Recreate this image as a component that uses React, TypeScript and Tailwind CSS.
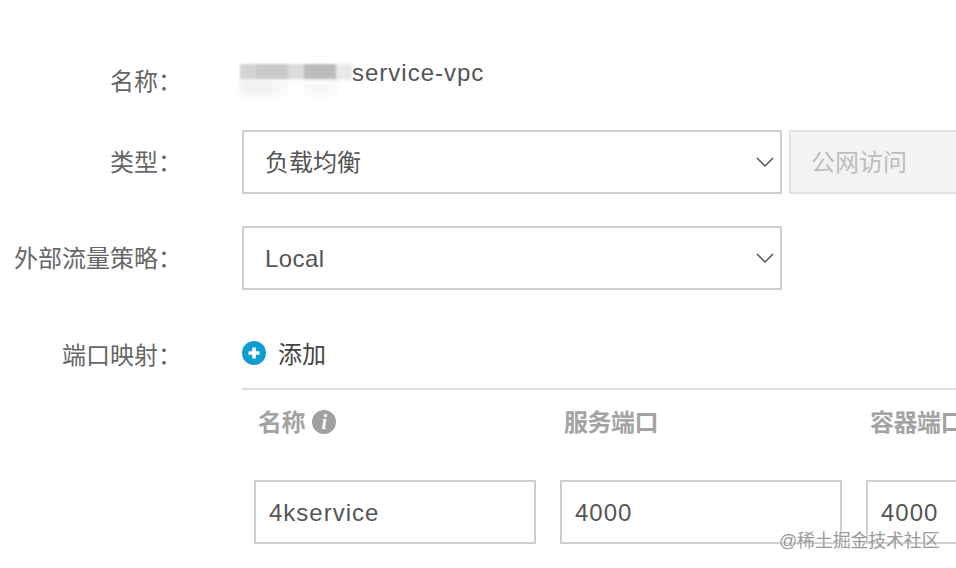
import React from 'react'

const FONT = "font-['Liberation_Sans','Noto_Sans_CJK_SC',sans-serif]"

const Chevron = () => (
    <svg width="18" height="10" viewBox="0 0 18 10" fill="none" className="shrink-0">
        <path d="M1 1l8 8 8-8" stroke="#555" strokeWidth="1.5" />
    </svg>
)

const Select = ({ text, spaced }: { text: string; spaced?: boolean }) => (
    <div className={`flex h-16 w-[540px] shrink-0 items-center justify-between border-2 border-[#cfcfcf] bg-white pl-[21px] pr-[6px] text-2xl text-[#555] ${spaced ? 'tracking-[0.4px]' : ''}`}>
        <span className="pt-[2px]">{text}</span>
        <Chevron />
    </div>
)

const Label = ({ text }: { text: string }) => (
    <div className="w-[182px] shrink-0 pt-[2px] text-right text-2xl text-[#666] whitespace-nowrap">{text}</div>
)

const COLUMNS = [
    { title: '名称', value: '4kservice', info: true },
    { title: '服务端口', value: '4000', info: false },
    { title: '容器端口', value: '4000', info: false },
]

const App = () => {
    return (
        <div className={`${FONT} relative h-[568px] w-[956px] overflow-hidden bg-white`}>
            {/* 名称 */}
            <div className="flex gap-[60px] pt-[64px]">
                <Label text="名称：" />
                <div className="relative -mt-[3px] h-[34px] text-2xl leading-[24px] tracking-[1px] text-[#555]">
                    <div className="pl-[110px] whitespace-nowrap">service-vpc</div>
                    <div className="absolute -left-[2px] top-[3px] flex h-4 w-[112px] blur-[1px]">
                        <div className="w-4 bg-[#d4d4d4]" />
                        <div className="w-[32px] bg-[#c9c9c9]" />
                        <div className="w-4 bg-[#dcdcdc]" />
                        <div className="w-[32px] bg-[#bcbcbc]" />
                        <div className="w-4 bg-[#e9e9e9]" />
                    </div>
                    <div className="absolute -left-[2px] top-[19px] flex h-4 w-[112px] blur-[2px]">
                        <div className="w-[32px] bg-[#f2f2f2]" />
                        <div className="w-4 bg-[#f8f8f8]" />
                        <div className="w-4 bg-white" />
                        <div className="w-[32px] bg-[#f8f8f8]" />
                    </div>
                </div>
            </div>

            {/* 类型 */}
            <div className="mt-[32px] flex items-center gap-[60px]">
                <Label text="类型：" />
                <div className="flex gap-[7px]">
                    <Select text="负载均衡" />
                    <div className="flex h-16 w-[300px] shrink-0 items-center border-2 border-[#e2e2e2] bg-[#f3f3f3] pl-[20px] pt-[2px] text-2xl text-[#bdbdbd]">
                        公网访问
                    </div>
                </div>
            </div>

            {/* 外部流量策略 */}
            <div className="mt-8 flex items-center gap-[60px]">
                <Label text="外部流量策略：" />
                <Select text="Local" spaced />
            </div>

            {/* 端口映射 */}
            <div className="mt-[48px] flex gap-[60px]">
                <Label text="端口映射：" />
                <div className="w-[760px] shrink-0">
                    <div className="flex items-center gap-3 text-2xl text-[#444]">
                        <svg width="24" height="24" viewBox="0 0 24 24" className="-translate-y-px shrink-0">
                            <circle cx="12" cy="12" r="12" fill="#0f9dcf" />
                            <path d="M12 6.5v11M6.5 12h11" stroke="#fff" strokeWidth="3.6" />
                        </svg>
                        <span className="translate-y-px">添加</span>
                    </div>
                    <div className="mt-[18px] border-t-2 border-[#dedede] pt-[17px] pl-3">
                        <div className="flex gap-6">
                            {COLUMNS.map((col, i) => (
                                <div key={i} className="w-[282px] shrink-0">
                                    <div className="flex items-center gap-[7px] pl-[4px] text-2xl font-bold tracking-[-0.5px] text-[#a3a3a3]">
                                        <span className="whitespace-nowrap">{col.title}</span>
                                        {col.info && (
                                            <span className="-mt-[2px] flex size-6 items-center justify-center rounded-full bg-[#a0a0a0] font-['Liberation_Serif',serif] text-xl italic leading-none text-white">
                                                i
                                            </span>
                                        )}
                                    </div>
                                    <div className="mt-[41px] flex h-16 items-center border-2 border-[#cfcfcf] bg-white pl-[13px] pt-[2px] text-2xl tracking-[1px] text-[#555]">
                                        {col.value}
                                    </div>
                                </div>
                            ))}
                        </div>
                    </div>
                </div>
            </div>

            {/* watermark */}
            <div className="absolute left-[779px] top-[527px] whitespace-nowrap text-lg tracking-[-0.2px] text-[#9a9a9a] [text-shadow:0_0_2px_#fff]">
                @稀土掘金技术社区
            </div>
        </div>
    )
}

export default App
